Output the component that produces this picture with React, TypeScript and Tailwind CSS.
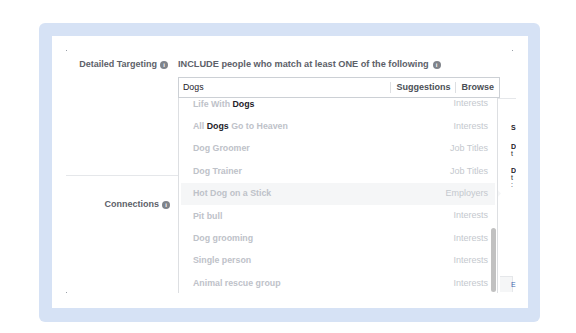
import React from "react";

const rows: { pre?: string; hit?: string; post?: string; cat: string; active?: boolean }[] = [
  { pre: "Life With ", hit: "Dogs", cat: "Interests" },
  { pre: "All ", hit: "Dogs", post: " Go to Heaven", cat: "Interests" },
  { pre: "Dog Groomer", cat: "Job Titles" },
  { pre: "Dog Trainer", cat: "Job Titles" },
  { pre: "Hot Dog on a Stick", cat: "Employers", active: true },
  { pre: "Pit bull", cat: "Interests" },
  { pre: "Dog grooming", cat: "Interests" },
  { pre: "Single person", cat: "Interests" },
  { pre: "Animal rescue group", cat: "Interests" },
];

function Info() {
  return (
    <span className="inline-flex h-[8px] w-[8px] items-center justify-center rounded-full bg-[#7f838a] text-[6px] font-bold leading-none text-white">
      i
    </span>
  );
}

export default function App() {
  return (
    <div
      className="h-[333px] w-[576px] bg-white pl-[39px] pt-[23px]"
      style={{ fontFamily: '"Liberation Sans", Arial, sans-serif' }}
    >
      <div className="h-[299px] w-[501px] rounded-[6px] bg-[#d6e2f5] p-[13px]">
        <div className="h-[272px] w-[476px] bg-white px-[12px] pt-[12px]">
          <div className="relative h-[248px] w-[452px] overflow-hidden">
            {/* corner ticks */}
            <div className="absolute left-[2px] top-[2px] h-px w-px bg-[#9aa0a8]" />
            <div className="absolute right-[3px] top-[2px] h-px w-px bg-[#9aa0a8]" />
            <div className="absolute bottom-[3px] left-[2px] h-px w-px bg-[#9aa0a8]" />

            <div className="grid grid-cols-[114px_1fr]">
              {/* left column */}
              <div className="pt-[12px]">
                <div className="flex h-[10px] items-center justify-end gap-[3px] pr-[10px] text-[9px] font-bold text-[#5d6169]">
                  <span>Detailed Targeting</span>
                  <Info />
                </div>
                <div className="ml-[2px] mt-[105px] h-px bg-[#e5e7ea]" />
                <div className="mt-[24px] flex h-[10px] items-center justify-end gap-[3px] pr-[8px] text-[9px] font-bold text-[#5d6169]">
                  <span>Connections</span>
                  <Info />
                </div>
              </div>

              {/* right column */}
              <div className="pt-[12px]">
                <div className="flex h-[10px] items-center gap-[4px] text-[9.2px] font-bold text-[#5d6169]">
                  <span>INCLUDE people who match at least ONE of the following</span>
                  <Info />
                </div>
                <div className="relative mt-[7px] w-[322px]">
                  <div className="flex h-[21px] items-center border border-[#ccd0d5] bg-white pl-[4px] pr-[5px]">
                    <span className="flex-1 text-[8.8px] text-[#1d2129]">Dogs</span>
                    <span className="mx-[5px] h-[11px] w-px bg-[#dddfe2]" />
                    <span className="text-[9px] font-bold text-[#4b4f56]">Suggestions</span>
                    <span className="mx-[5px] h-[11px] w-px bg-[#dddfe2]" />
                    <span className="text-[9px] font-bold text-[#4b4f56]">Browse</span>
                  </div>

                  {/* dropdown */}
                  <div className="absolute left-0 top-full z-10 h-[195px] w-[320px] overflow-hidden border-x border-[#dddfe2] bg-white">
                    <div className="-mt-[5px]">
                      {rows.map((r, i) => (
                        <div
                          key={i}
                          className={`mx-[2px] flex h-[22.4px] items-center pl-[12px] pr-[7px] ${
                            r.active ? "bg-[#f5f6f7]" : ""
                          }`}
                        >
                          <span className="flex-1 text-[8.8px] font-bold text-[#bec2c9]">
                            {r.pre}
                            {r.hit && <span className="text-[#1d2129]">{r.hit}</span>}
                            {r.post}
                          </span>
                          <span className="text-[9px] text-[#c4c8ce]">{r.cat}</span>
                        </div>
                      ))}
                    </div>
                    <div className="absolute right-[1px] top-[130px] h-[64px] w-[5px] rounded-full bg-[#c1c1c1]" />
                  </div>

                  {/* side tooltip, clipped */}
                  <div className="absolute left-[320px] top-full h-[195px] w-[60px] border-t border-[#e5e7ea] bg-white pl-[13px] text-[7px] font-bold leading-[7px] text-[#1d2129]">
                    <div className="absolute -left-[3px] top-[92px] h-[5px] w-[5px] rotate-45 border-b border-l border-[#dddfe2] bg-[#f5f6f7]" />
                    <div className="mt-[25px]">S</div>
                    <div className="mt-[12px]">D</div>
                    <div className="font-normal">t</div>
                    <div className="mt-[10px]">D</div>
                    <div className="font-normal">t</div>
                    <div className="font-normal">:</div>
                    <div className="absolute bottom-[1px] left-[2px] flex h-[16px] w-[13px] items-center border-t border-r border-[#e5e7ea] bg-[#f5f6f7] pl-[11px] text-[7px] font-normal text-[#4267b2]">
                      E
                    </div>
                  </div>
                </div>
              </div>
            </div>
          </div>
        </div>
      </div>
    </div>
  );
}
